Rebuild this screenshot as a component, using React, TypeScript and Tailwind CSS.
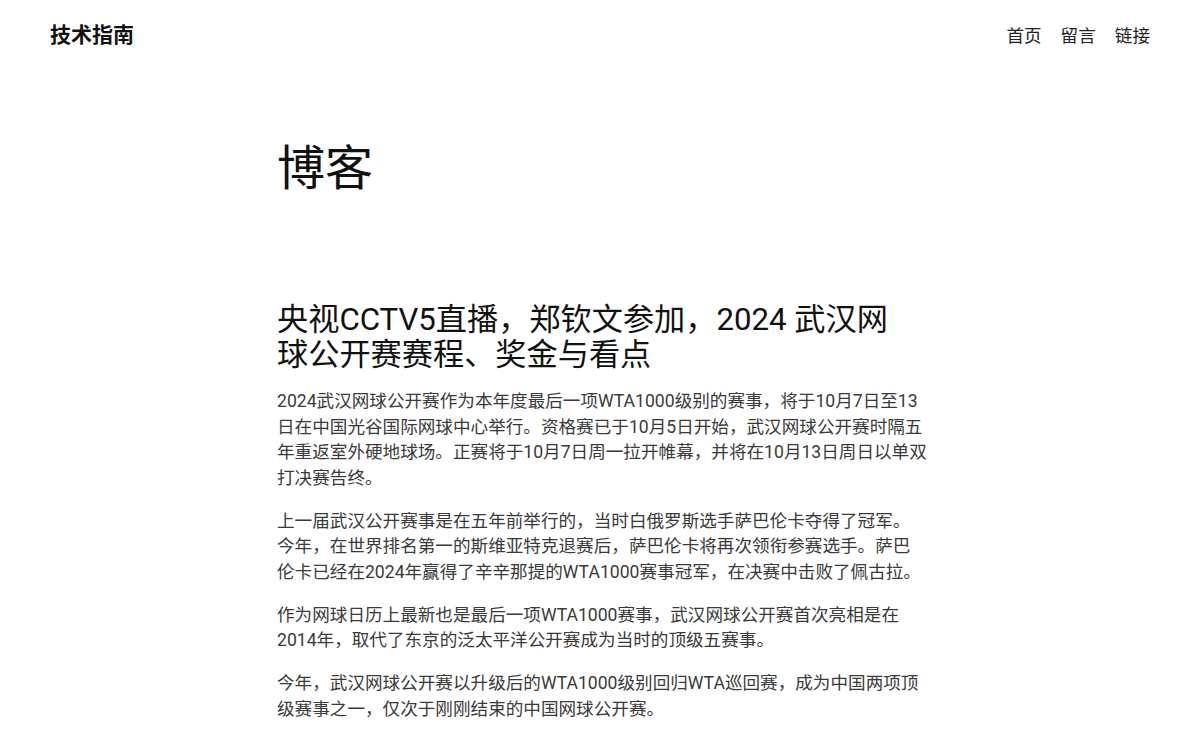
import React from 'react';

const paragraphs = [
  '2024武汉网球公开赛作为本年度最后一项WTA1000级别的赛事，将于10月7日至13日在中国光谷国际网球中心举行。资格赛已于10月5日开始，武汉网球公开赛时隔五年重返室外硬地球场。正赛将于10月7日周一拉开帷幕，并将在10月13日周日以单双打决赛告终。',
  '上一届武汉公开赛事是在五年前举行的，当时白俄罗斯选手萨巴伦卡夺得了冠军。今年，在世界排名第一的斯维亚特克退赛后，萨巴伦卡将再次领衔参赛选手。萨巴伦卡已经在2024年赢得了辛辛那提的WTA1000赛事冠军，在决赛中击败了佩古拉。',
  '作为网球日历上最新也是最后一项WTA1000赛事，武汉网球公开赛首次亮相是在2014年，取代了东京的泛太平洋公开赛成为当时的顶级五赛事。',
  '今年，武汉网球公开赛以升级后的WTA1000级别回归WTA巡回赛，成为中国两项顶级赛事之一，仅次于刚刚结束的中国网球公开赛。',
];

const navItems = ['首页', '留言', '链接'];

export default function App() {
  return (
    <div className="min-h-screen bg-white pl-[4px] font-['Roboto','Noto_Sans_CJK_SC',sans-serif] text-[#111]">
      {/* Header */}
      <header className="flex h-[72px] items-center justify-between pl-[46px] pr-[50px]">
        <a href="#" className="text-[21px] font-bold text-[#111]">技术指南</a>
        <nav className="flex items-center gap-[19px] text-[17.6px] text-[#222]">
          {navItems.map((item) => (
            <a key={item} href="#">{item}</a>
          ))}
        </nav>
      </header>

      {/* Content */}
      <main className="mx-auto max-w-[650px]">
        <h1 className="mt-[73px] text-[48px] font-normal leading-none text-[#111]">博客</h1>

        <article className="mt-[110px]">
          <h2 className="pr-[12px] text-[31.2px] font-normal leading-[34.5px] text-[#111]">
            央视CCTV5直播，郑钦文参加，2024 武汉网球公开赛赛程、奖金与看点
          </h2>
          <div className="mt-[17px] text-[17.6px] leading-[25.5px] text-[#3a3a3a]">
            {paragraphs.map((p, i) => (
              <p key={i} className="mb-[17.5px]">{p}</p>
            ))}
          </div>
        </article>
      </main>
    </div>
  );
}
